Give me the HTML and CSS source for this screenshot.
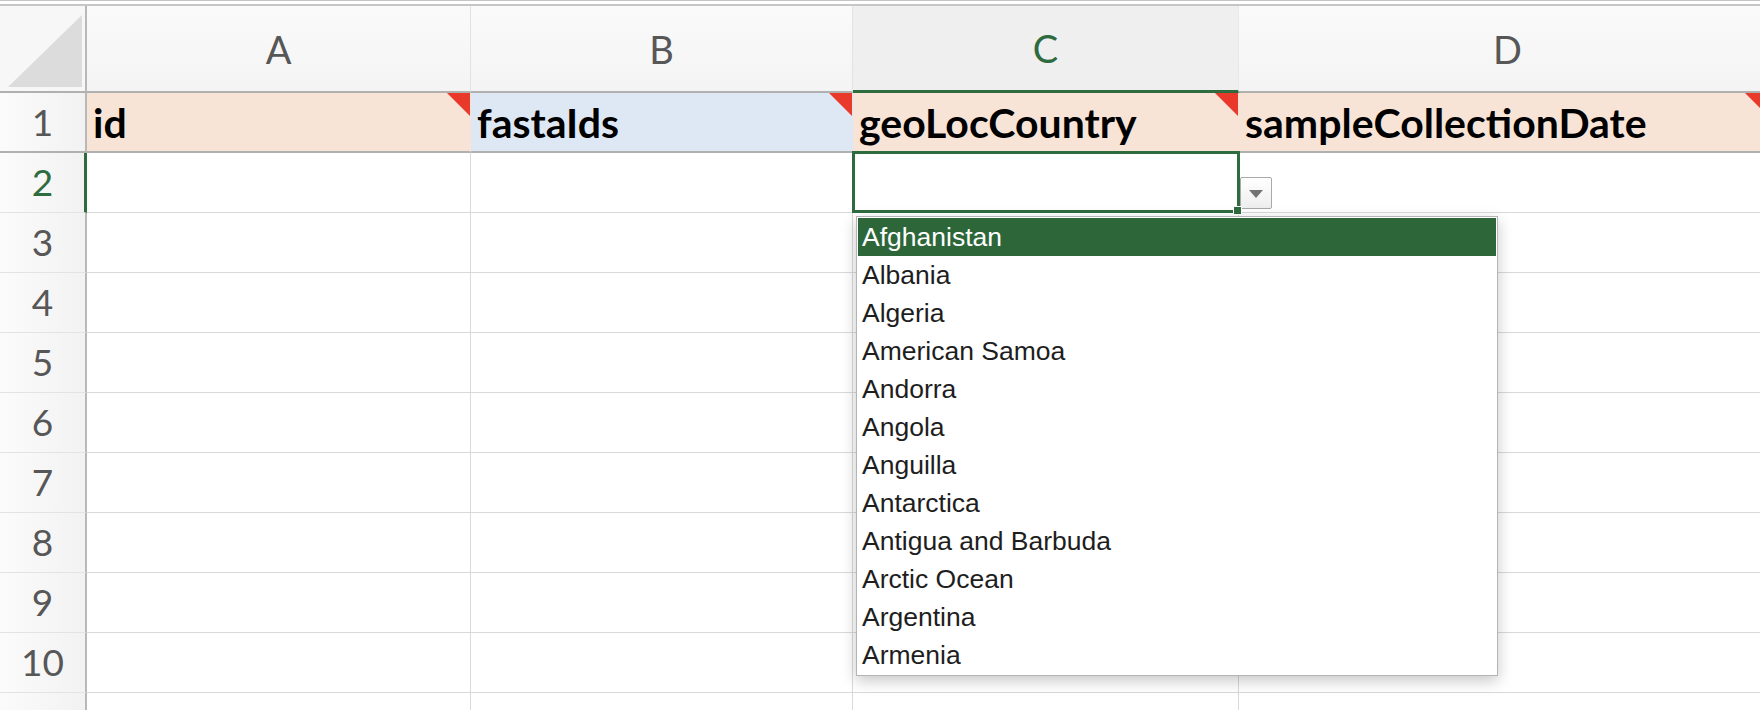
FILE: index.html
```html
<!DOCTYPE html>
<html>
<head>
<meta charset="utf-8">
<link rel="stylesheet" href="styles.css">
</head>
<body>
<div class="sheet">
  <div class="topbar"></div>
  <div class="grid">
    <div class="corner"><svg width="85" height="85" viewBox="0 0 85 85"><polygon points="8,81 82,9 82,81" fill="#dcdcdc"/></svg></div>
    <div class="colhead">A</div>
    <div class="colhead">B</div>
    <div class="colhead active">C</div>
    <div class="colhead last"><span class="dlabel">D</span></div>

    <div class="rowhead">1</div>
    <div class="hcell peach">id</div>
    <div class="hcell blue">fastaIds</div>
    <div class="hcell peach">geoLocCountry</div>
    <div class="hcell peach">sampleCollectionDate</div>

    <div class="rowhead active">2</div>
    <div class="cell"></div>
    <div class="cell"></div>
    <div class="cell sel">
      <div class="dd-btn"><span class="tri"></span></div>
      <div class="fill-handle"></div>
      <ul class="dd-list">
        <li class="on">Afghanistan</li>
        <li>Albania</li>
        <li>Algeria</li>
        <li>American Samoa</li>
        <li>Andorra</li>
        <li>Angola</li>
        <li>Anguilla</li>
        <li>Antarctica</li>
        <li>Antigua and Barbuda</li>
        <li>Arctic Ocean</li>
        <li>Argentina</li>
        <li>Armenia</li>
      </ul>
    </div>
    <div class="cell"></div>

    <div class="rowhead">3</div><div class="cell"></div><div class="cell"></div><div class="cell"></div><div class="cell"></div>
    <div class="rowhead">4</div><div class="cell"></div><div class="cell"></div><div class="cell"></div><div class="cell"></div>
    <div class="rowhead">5</div><div class="cell"></div><div class="cell"></div><div class="cell"></div><div class="cell"></div>
    <div class="rowhead">6</div><div class="cell"></div><div class="cell"></div><div class="cell"></div><div class="cell"></div>
    <div class="rowhead">7</div><div class="cell"></div><div class="cell"></div><div class="cell"></div><div class="cell"></div>
    <div class="rowhead">8</div><div class="cell"></div><div class="cell"></div><div class="cell"></div><div class="cell"></div>
    <div class="rowhead">9</div><div class="cell"></div><div class="cell"></div><div class="cell"></div><div class="cell"></div>
    <div class="rowhead">10</div><div class="cell"></div><div class="cell"></div><div class="cell"></div><div class="cell"></div>
    <div class="rowhead">11</div><div class="cell"></div><div class="cell"></div><div class="cell"></div><div class="cell"></div>
  </div>
</div>
</body>
</html>
```
FILE: styles.css
```css
* { box-sizing: border-box; }
html, body { margin: 0; padding: 0; }
body {
  width: 1760px;
  height: 710px;
  overflow: hidden;
  background: #ffffff;
  font-family: "Lato", "Liberation Sans", sans-serif;
}
.sheet {
  width: 1760px;
  height: 710px;
  overflow: hidden;
}
.topbar {
  height: 6px;
  border-top: 1px solid #c4c4c4;
  border-bottom: 2px solid #c6c6c6;
  background: #ffffff;
}
.grid {
  display: grid;
  grid-template-columns: 87px 384px 382px 386px 530px;
  grid-template-rows: 87px 60px;
  grid-auto-rows: 60px;
  width: 1769px;
}
.corner {
  background: #f7f7f7;
  border-right: 2px solid #b8b8b8;
  border-bottom: 2px solid #b0b0b0;
  display: flex;
}
.colhead {
  background: linear-gradient(#fafafa, #f4f4f4);
  border-right: 1px solid #e2e2e2;
  border-bottom: 2px solid #b0b0b0;
  color: #575757;
  font-size: 38px;
  line-height: 1;
  display: flex;
  align-items: center;
  justify-content: center;
}
.colhead.active {
  background: #efefef;
  color: #2e6b3e;
  border-bottom: 3px solid #2e6b3e;
  border-right-color: #e8e8e8;
}
.colhead.last { justify-content: flex-start; padding-left: 254px; }
.rowhead {
  background: linear-gradient(90deg, #fbfbfb, #f2f2f2);
  border-right: 2px solid #b8b8b8;
  border-bottom: 1px solid #e3e3e3;
  color: #575757;
  font-size: 37px;
  line-height: 1;
  display: flex;
  align-items: center;
  justify-content: center;
  padding-bottom: 2px;
}
.rowhead.active {
  color: #2e6b3e;
  border-right: 3px solid #2e6b3e;
  padding-left: 1px;
}
.grid > .rowhead:nth-child(6) { border-bottom: 2px solid #b0b0b0; }
.hcell {
  position: relative;
  border-right: 1px solid transparent;
  border-bottom: 2px solid #b0b0b0;
  font-weight: 700;
  font-size: 41px;
  line-height: 1;
  color: #000000;
  display: flex;
  align-items: flex-end;
  padding: 0 0 8px 6px;
  white-space: nowrap;
}
.hcell::after {
  content: "";
  position: absolute;
  top: 0;
  right: 0;
  width: 0;
  height: 0;
  border-top: 23px solid #e8392b;
  border-left: 23px solid transparent;
}
.peach { background: #f8e4d7; }
.blue { background: #dee8f4; }
.cell {
  border-right: 1px solid #d9d9d9;
  border-bottom: 1px solid #d9d9d9;
  background: #ffffff;
}
.sel {
  position: relative;
  z-index: 5;
}
.sel::after {
  content: "";
  position: absolute;
  top: -2px;
  left: -1px;
  right: -2px;
  bottom: -1px;
  border: 3px solid #2e6b3e;
  pointer-events: none;
}
.fill-handle {
  position: absolute;
  left: 380px;
  top: 53px;
  width: 9px;
  height: 9px;
  background: #2e6b3e;
  border: 1px solid #ffffff;
  z-index: 2;
}
.dd-btn {
  position: absolute;
  left: 387px;
  top: 24px;
  width: 32px;
  height: 32px;
  border: 1px solid #a9a9a9;
  border-radius: 2px;
  background: linear-gradient(#ffffff, #eeeeee);
  display: flex;
  align-items: center;
  justify-content: center;
}
.tri {
  width: 0;
  height: 0;
  border-left: 7px solid transparent;
  border-right: 7px solid transparent;
  border-top: 8px solid #737373;
  margin-top: 2px;
}
.dd-list {
  position: absolute;
  left: 3px;
  top: 63px;
  width: 642px;
  margin: 0;
  padding: 1px;
  list-style: none;
  background: #ffffff;
  border: 1px solid #b4b4b4;
  box-shadow: 0 5px 14px rgba(0, 0, 0, 0.22);
  z-index: 3;
}
.dd-list li {
  height: 38px;
  line-height: 38px;
  padding-left: 4px;
  font-family: "Liberation Sans", Arial, sans-serif;
  font-size: 26.5px;
  color: #1e1e1e;
  white-space: nowrap;
}
.dd-list li.on {
  background: #2c6639;
  color: #ffffff;
}
```
